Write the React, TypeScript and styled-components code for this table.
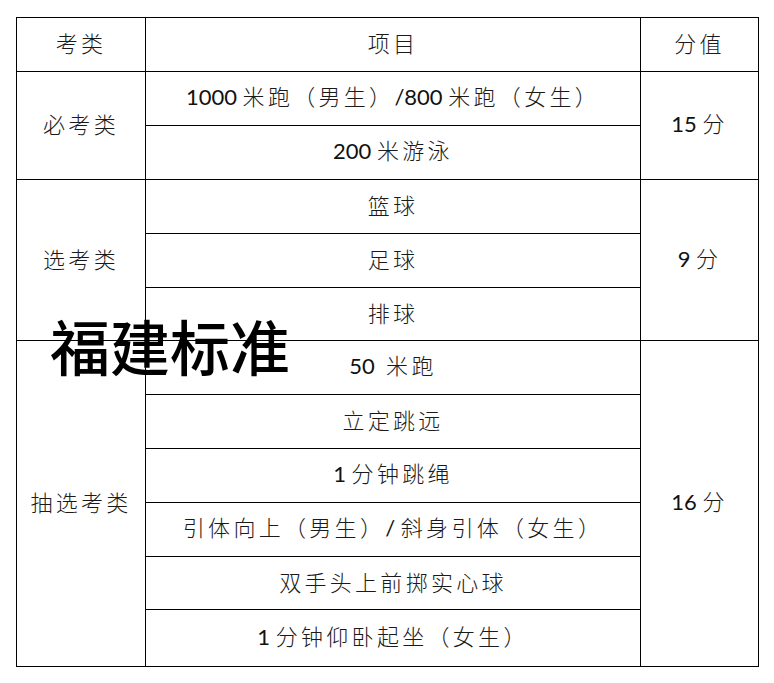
import React from "react";
import styled, { createGlobalStyle } from "styled-components";

const GlobalStyle = createGlobalStyle`
  html, body {
    margin: 0;
    padding: 0;
    background: #ffffff;
  }
  body {
    font-family: "Noto Sans CJK SC", "Noto Sans", sans-serif;
    color: #1a1a1a;
  }
`;

const Page = styled.div`
  position: relative;
  width: 774px;
  height: 683px;
  padding: 17px 0 0 16px;
  box-sizing: border-box;
`;

const Table = styled.table`
  border-collapse: collapse;
  table-layout: fixed;
  width: 742px;
`;

const Row = styled.tr<{ $h: number }>`
  height: ${(p) => p.$h}px;
`;

const Cell = styled.td`
  border: 1.5px solid #000;
  padding: 0 0 4px 0;
  text-align: center;
  vertical-align: middle;
  font-size: 22px;
  font-weight: 300;
  letter-spacing: 3.3px;
  line-height: 1.2;
  white-space: nowrap;
`;

const Num = styled.span`
  font-family: Lato, "Liberation Sans", sans-serif;
  font-size: 22px;
  font-weight: 400;
  letter-spacing: 0;
  color: #111;
`;

const Stamp = styled.div`
  position: absolute;
  left: 50px;
  top: 315px;
  font-family: "Noto Sans CJK SC", sans-serif;
  font-size: 60px;
  font-weight: 500;
  line-height: 1;
  color: #000;
  pointer-events: none;
`;

const App = () => {
  return (
    <>
      <GlobalStyle />
      <Page>
        <Table>
          <colgroup>
            <col style={{ width: 129 }} />
            <col style={{ width: 495 }} />
            <col style={{ width: 118 }} />
          </colgroup>
          <tbody>
            <Row $h={54}>
              <Cell>考类</Cell>
              <Cell>项目</Cell>
              <Cell>分值</Cell>
            </Row>
            <Row $h={54}>
              <Cell rowSpan={2}>必考类</Cell>
              <Cell>
                <Num>1000 </Num>米跑（男生）<Num>/800 </Num>米跑（女生）
              </Cell>
              <Cell rowSpan={2}>
                <Num>15 </Num>分
              </Cell>
            </Row>
            <Row $h={54}>
              <Cell>
                <Num>200 </Num>米游泳
              </Cell>
            </Row>
            <Row $h={54}>
              <Cell rowSpan={3}>选考类</Cell>
              <Cell>篮球</Cell>
              <Cell rowSpan={3}>
                <Num>9 </Num>分
              </Cell>
            </Row>
            <Row $h={54}>
              <Cell>足球</Cell>
            </Row>
            <Row $h={53}>
              <Cell>排球</Cell>
            </Row>
            <Row $h={54}>
              <Cell rowSpan={6}>抽选考类</Cell>
              <Cell>
                <Num>50&nbsp; </Num>米跑
              </Cell>
              <Cell rowSpan={6}>
                <Num>16 </Num>分
              </Cell>
            </Row>
            <Row $h={54}>
              <Cell>立定跳远</Cell>
            </Row>
            <Row $h={54}>
              <Cell>
                <Num>1 </Num>分钟跳绳
              </Cell>
            </Row>
            <Row $h={54}>
              <Cell>
                引体向上（男生）<Num>/ </Num>斜身引体（女生）
              </Cell>
            </Row>
            <Row $h={53}>
              <Cell>双手头上前掷实心球</Cell>
            </Row>
            <Row $h={57}>
              <Cell>
                <Num>1 </Num>分钟仰卧起坐（女生）
              </Cell>
            </Row>
          </tbody>
        </Table>
        <Stamp>福建标准</Stamp>
      </Page>
    </>
  );
};

export default App;
